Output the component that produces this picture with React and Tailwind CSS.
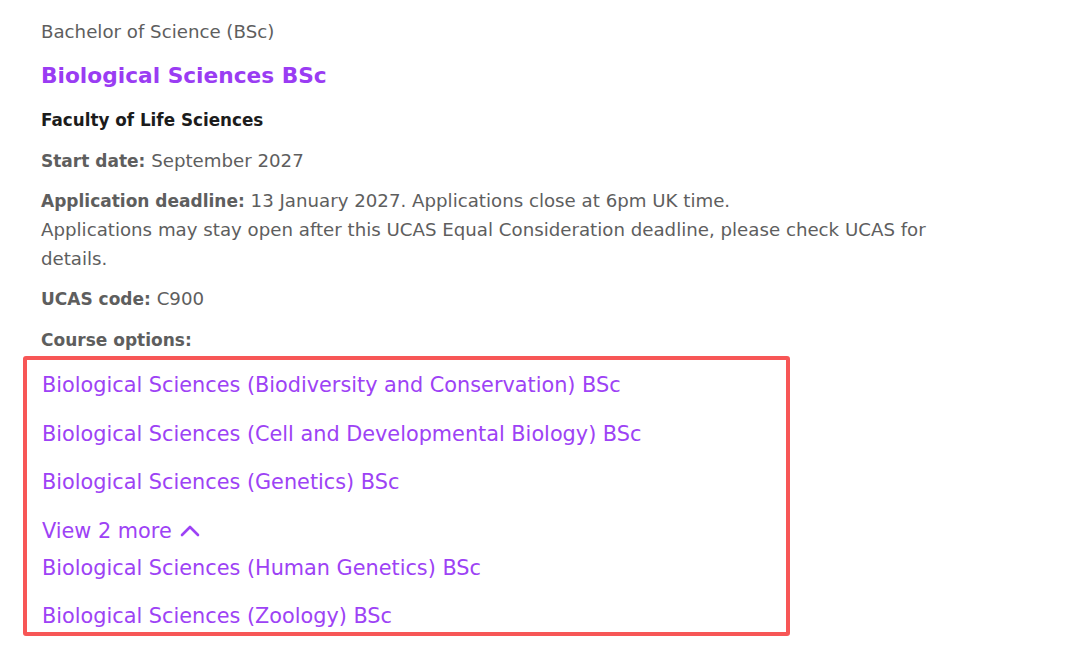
import React from "react";

export default function App() {
  return (
    <div className="w-[1080px] h-[651px] bg-white overflow-hidden pt-[17px] text-[#5e5e5e]" style={{ fontFamily: '"DejaVu Sans", "Open Sans", sans-serif' }}>
      <div className="pl-[41px] pr-[40px]">
        <div className="text-[18.2px] leading-[29px]">Bachelor of Science (BSc)</div>
        <div className="mt-[13px] text-[21.7px] leading-[34px] font-bold text-[#9a3cf3]">Biological Sciences BSc</div>
        <div className="mt-[13px] text-[16.8px] leading-[29px] font-bold text-[#1c1c1c]">Faculty of Life Sciences</div>
        <div className="mt-[11px] text-[18.2px] leading-[29px]"><span className="font-bold text-[17px] leading-none">Start date:</span> September 2027</div>
        <div className="mt-[11px] text-[18.2px] leading-[29px] w-[920px]">
          <span className="font-bold text-[17px] leading-none">Application deadline:</span> 13 January 2027. Applications close at 6pm UK time.
          <br />
          Applications may stay open after this UCAS Equal Consideration deadline, please check UCAS for details.
        </div>
        <div className="mt-[11px] text-[18.2px] leading-[29px]"><span className="font-bold text-[17px] leading-none">UCAS code:</span> C900</div>
        <div className="mt-[13px] text-[17px] leading-[29px] font-bold">Course options:</div>
      </div>
      <div className="ml-[23px] mt-[1px] w-[767px] h-[280px] border-4 border-[#f75656] rounded-[3px] pl-[15px] pt-[10px] text-[#9d42f5] text-[20.8px] leading-[30px]">
        <div>Biological Sciences (Biodiversity and Conservation) BSc</div>
        <div className="mt-[19px]">Biological Sciences (Cell and Developmental Biology) BSc</div>
        <div className="mt-[18px]">Biological Sciences (Genetics) BSc</div>
        <div className="mt-[19px] flex items-center gap-[8px]">
          <span>View 2 more</span>
          <svg width="20" height="12" viewBox="0 0 20 12" fill="none" stroke="#9d42f5" strokeWidth="2.6" strokeLinecap="round" strokeLinejoin="round">
            <path d="M2 10 L10 2 L18 10" />
          </svg>
        </div>
        <div className="mt-[7px]">Biological Sciences (Human Genetics) BSc</div>
        <div className="mt-[18px]">Biological Sciences (Zoology) BSc</div>
      </div>
    </div>
  );
}
